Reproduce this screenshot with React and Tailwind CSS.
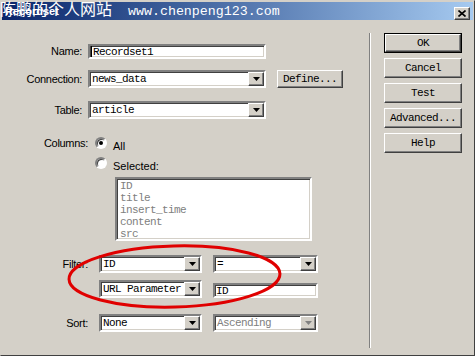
import React from "react";

const mono = { fontFamily: '"Liberation Mono", "DejaVu Sans Mono", monospace' };
const sans = { fontFamily: '"Liberation Sans", Arial, sans-serif' };

const sunken =
  "border-2 border-t-[#808080] border-l-[#808080] border-r-white border-b-white shadow-[inset_1px_1px_0_#404040,inset_-1px_-1px_0_#d4d0c8]";
const raised =
  "border border-t-white border-l-white border-r-[#404040] border-b-[#404040] shadow-[inset_-1px_-1px_0_#808080,inset_1px_1px_0_#d4d0c8] bg-[#d4d0c8]";

function Arrow({ disabled }) {
  return (
    <div className={`w-[16px] h-full flex items-center justify-center ${raised}`}>
      <svg width="7" height="4" viewBox="0 0 7 4">
        <polygon points="0,0 7,0 3.5,4" fill={disabled ? "#808080" : "#000"} />
      </svg>
    </div>
  );
}

function Select({ value, w, disabled }) {
  return (
    <div
      className={`h-[18px] flex items-stretch bg-white ${sunken}`}
      style={{ width: w }}
    >
      <div
        className={`flex-1 flex items-center pl-[2px] text-[11px] tracking-[-0.6px] leading-[12px] whitespace-nowrap overflow-hidden ${disabled ? "text-[#808080]" : "text-black"}`}
        style={mono}
      >
        {value}
      </div>
      <Arrow disabled={disabled} />
    </div>
  );
}

function Input({ value, w, caret }) {
  return (
    <div
      className={`h-[15px] flex items-center bg-white pl-[1px] text-[11px] tracking-[-0.6px] leading-[12px] text-black ${sunken}`}
      style={{ ...mono, width: w }}
    >
      {caret && <span className="w-[1px] h-[11px] bg-black mr-[1px]" />}
      {value}
    </div>
  );
}

function Btn({ children, def, className = "" }) {
  const inner = (
    <div
      className={`w-full h-full flex items-center justify-center text-[11px] tracking-[-0.6px] leading-[12px] text-black ${raised}`}
      style={mono}
    >
      {children}
    </div>
  );
  if (def)
    return <div className={`border border-black ${className}`}>{inner}</div>;
  return <div className={className}>{inner}</div>;
}

function Radio({ checked }) {
  return (
    <div className="w-[12px] h-[12px] shrink-0 rounded-full border-2 border-t-[#808080] border-l-[#808080] border-r-white border-b-white bg-white flex items-center justify-center shadow-[inset_1px_1px_0_#404040]">
      {checked && <div className="w-[4px] h-[4px] rounded-full bg-black" />}
    </div>
  );
}

function Label({ children, w }) {
  return (
    <div
      className="text-[11px] leading-[13px] text-black text-right tracking-[-0.3px] shrink-0"
      style={{ ...sans, width: w }}
    >
      {children}
    </div>
  );
}

export default function App() {
  return (
    <div className="relative w-[475px] h-[356px] bg-[#d4d0c8] overflow-hidden">
      <div className="absolute inset-0 border border-t-[#d4d0c8] border-l-[#d4d0c8] border-r-[#404040] border-b-[#404040] pointer-events-none" />
      <div className="w-full h-full p-[2px] flex flex-col shadow-[inset_1px_1px_0_#ffffff,inset_-1px_-1px_0_#808080]">
        {/* Title bar */}
        <div className="relative h-[18px] flex items-start justify-between bg-gradient-to-r from-[#0a246a] to-[#a6caf0]">
          <div
            className="pl-[3px] pt-[3px] text-[11px] font-bold text-white leading-[12px]"
            style={sans}
          >
            Recordset
          </div>
          <div className={`mt-[5px] mr-[3px] w-[16px] h-[13px] flex items-center justify-center ${raised}`}>
            <svg width="8" height="7" viewBox="0 0 8 7">
              <path d="M0.5 0.5 L7.5 6.5 M7.5 0.5 L0.5 6.5" stroke="#000" strokeWidth="1.6" />
            </svg>
          </div>
        </div>

        {/* Body */}
        <div className="flex flex-1">
          {/* Left */}
          <div className="w-[367px] flex flex-col">
            <div className="mt-[24px] h-[15px] flex items-center gap-[6px]">
              <Label w={80}>Name:</Label>
              <Input value="Recordset1" w={178} caret />
            </div>
            <div className="mt-[11px] h-[18px] flex items-center">
              <Label w={80}>Connection:</Label>
              <div className="ml-[6px]">
                <Select value="news_data" w={178} />
              </div>
              <Btn className="ml-[11px] w-[66px] h-[18px]">Define...</Btn>
            </div>
            <div className="mt-[13px] h-[18px] flex items-center gap-[6px]">
              <Label w={80}>Table:</Label>
              <Select value="article" w={178} />
            </div>
            <div className="mt-[18px] flex items-start">
              <Label w={86}>Columns:</Label>
              <div className="ml-[7px] flex flex-col">
                <div className="h-[12px] flex items-center">
                  <Radio checked />
                  <span
                    className="relative top-[3px] ml-[6px] text-[11px] leading-[13px] text-black"
                    style={sans}
                  >
                    All
                  </span>
                </div>
                <div className="mt-[8px] h-[12px] flex items-center">
                  <Radio />
                  <span
                    className="relative top-[3px] ml-[6px] text-[11px] leading-[13px] text-black"
                    style={sans}
                  >
                    Selected:
                  </span>
                </div>
              </div>
            </div>
            <div
              className={`ml-[113px] mt-[8px] w-[197px] h-[64px] bg-white pl-[3px] pt-[1px] text-[11px] tracking-[-0.6px] leading-[12px] text-[#808080] ${sunken}`}
              style={mono}
            >
              <div>ID</div>
              <div>title</div>
              <div>insert_time</div>
              <div>content</div>
              <div>src</div>
            </div>
            <div className="mt-[14px] h-[18px] flex items-center">
              <Label w={86}>Filter:</Label>
              <div className="ml-[11px]">
                <Select value="ID" w={103} />
              </div>
              <div className="ml-[11px]">
                <Select value="=" w={105} />
              </div>
            </div>
            <div className="mt-[7px] h-[18px] flex items-end">
              <div className="ml-[97px]">
                <Select value="URL Parameter" w={103} />
              </div>
              <div className="ml-[11px]">
                <Input value="ID" w={105} />
              </div>
            </div>
            <div className="mt-[16px] h-[18px] flex items-center">
              <Label w={86}>Sort:</Label>
              <div className="ml-[11px]">
                <Select value="None" w={103} />
              </div>
              <div className="ml-[11px]">
                <Select value="Ascending" w={105} disabled />
              </div>
            </div>
          </div>

          {/* Separator */}
          <div className="mt-[13px] h-[315px] w-[2px] border-l border-l-[#808080] border-r border-r-white" />

          {/* Right buttons */}
          <div className="pl-[13px] pt-[13px] flex flex-col gap-[5px]">
            <Btn def className="w-[78px] h-[20px]">OK</Btn>
            <Btn className="w-[78px] h-[20px]">Cancel</Btn>
            <Btn className="w-[78px] h-[20px]">Test</Btn>
            <Btn className="w-[78px] h-[20px]">Advanced...</Btn>
            <Btn className="w-[78px] h-[20px]">Help</Btn>
          </div>
        </div>
      </div>

      {/* Watermark over title bar */}
      <div className="absolute left-0 top-[-2px] flex items-baseline text-white pointer-events-none whitespace-nowrap">
        <span
          className="text-[16px] leading-[20px]"
          style={{ fontFamily: '"Noto Sans CJK SC", sans-serif' }}
        >
          陈鹏的个人网站
        </span>
        <span className="ml-[16px] text-[13.3px] leading-[20px]" style={mono}>
          www.chenpeng123.com
        </span>
      </div>

      {/* Red hand-drawn ellipse */}
      <svg
        className="absolute left-0 top-0 pointer-events-none"
        width="475"
        height="356"
        viewBox="0 0 475 356"
      >
        <ellipse
          cx="174.5"
          cy="276.5"
          rx="105.5"
          ry="30.5"
          fill="none"
          stroke="#e00000"
          strokeWidth="3"
          transform="rotate(-1.5 174.5 276.5)"
        />
      </svg>
    </div>
  );
}
